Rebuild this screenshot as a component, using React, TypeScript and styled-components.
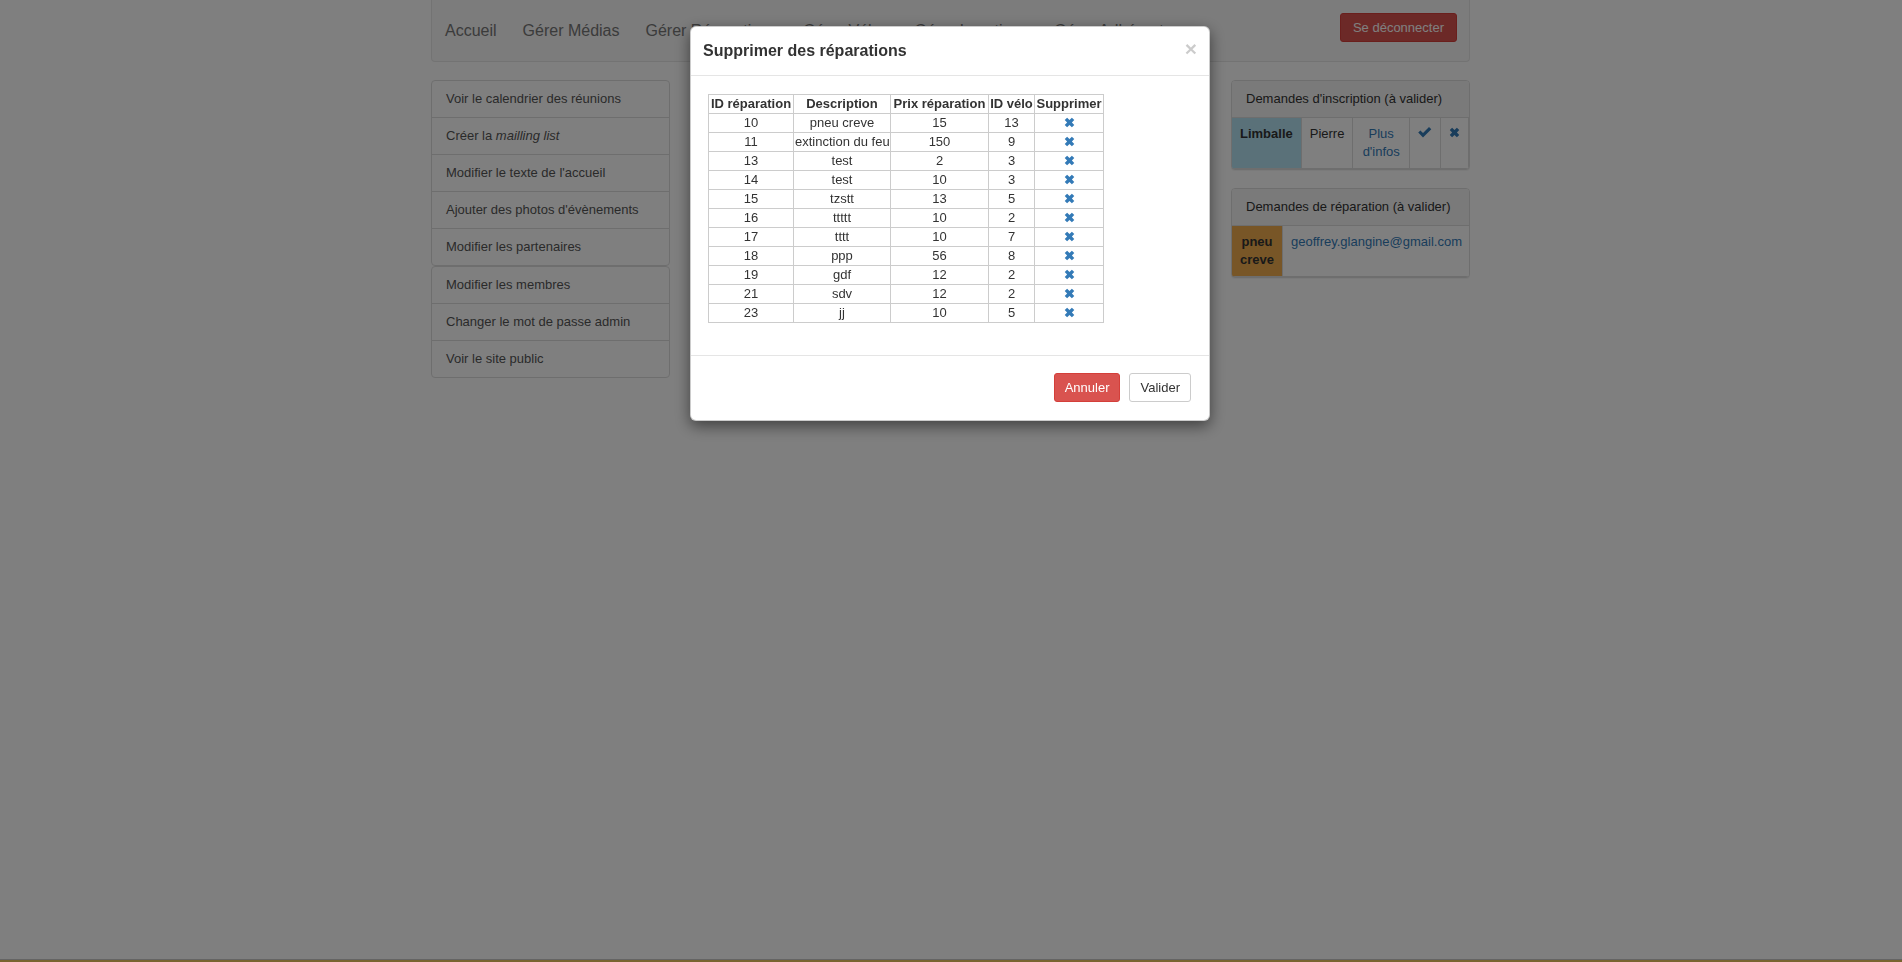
import React from "react";
import styled, { createGlobalStyle } from "styled-components";

const GlobalStyle = createGlobalStyle`
  * { box-sizing: border-box; }
  html, body { margin: 0; padding: 0; }
  body {
    font-family: "Liberation Sans", Arial, Helvetica, sans-serif;
    font-size: 13px;
    color: #333;
    background: #fff;
    overflow: hidden;
  }
`;

const Page = styled.div`
  min-height: 100vh;
  display: flex;
  flex-direction: column;
`;

const Container = styled.div`
  width: 1039px;
  margin-left: calc(50% - 520px);
`;

const Navbar = styled.nav`
  height: 62px;
  background: #f8f8f8;
  border: 1px solid #e7e7e7;
  border-top: none;
  border-radius: 0 0 4px 4px;
  display: flex;
  align-items: center;
  padding-right: 12px;
`;

const NavList = styled.ul`
  display: flex;
  list-style: none;
  margin: 0;
  padding: 0;
`;

const NavLink = styled.li`
  padding: 0 13px;
  font-size: 16px;
  line-height: 20px;
  color: #777;
  white-space: nowrap;
`;

const Button = styled.button<{ $variant?: "danger" | "default" }>`
  font-family: inherit;
  font-size: 13px;
  line-height: 19px;
  padding: 4px 10px;
  border-radius: 3px;
  cursor: pointer;
  white-space: nowrap;
  border: 1px solid ${(p) => (p.$variant === "danger" ? "#d43f3a" : "#ccc")};
  background: ${(p) => (p.$variant === "danger" ? "#d9534f" : "#fff")};
  color: ${(p) => (p.$variant === "danger" ? "#fff" : "#333")};
`;

const LogoutButton = styled(Button)`
  margin-left: auto;
  align-self: flex-start;
  margin-top: 13px;
  padding: 4px 12px;
`;

const Row = styled.div`
  display: grid;
  grid-template-columns: 239px 1fr 239px;
  margin-top: 18px;
  align-items: start;
`;

const ListGroup = styled.div`
  display: flex;
  flex-direction: column;
`;

const ListItem = styled.a`
  display: block;
  padding: 9px 14px;
  line-height: 18px;
  font-size: 13px;
  color: #555;
  background: #fff;
  border: 1px solid #ddd;
  margin-bottom: -1px;
  text-decoration: none;
  &:first-child { border-radius: 4px 4px 0 0; }
  &:last-child { border-radius: 0 0 4px 4px; margin-bottom: 0; }
`;

const Panel = styled.div`
  border: 1px solid #ddd;
  border-radius: 4px;
  background: #fff;
  margin-bottom: 18px;
  overflow: hidden;
  box-shadow: 0 1px 1px rgba(0, 0, 0, 0.05);
`;

const PanelHeading = styled.div`
  padding: 9px 14px;
  line-height: 18px;
  background: #f5f5f5;
  border-bottom: 1px solid #ddd;
  color: #333;
`;

const PanelTable = styled.table`
  border-collapse: collapse;
  font-size: 13px;
`;

const PanelCell = styled.td<{ $bg?: string; $bold?: boolean; $center?: boolean; $link?: boolean }>`
  border: 1px solid #ddd;
  border-top: none;
  padding: 7px 8px;
  line-height: 18px;
  vertical-align: top;
  background: ${(p) => p.$bg || "#fff"};
  font-weight: ${(p) => (p.$bold ? "bold" : "normal")};
  text-align: ${(p) => (p.$center ? "center" : "left")};
  color: ${(p) => (p.$link ? "#337ab7" : "#333")};
  &:first-child { border-left: none; }
`;

const BottomStrip = styled.div`
  margin-top: auto;
  height: 3px;
  border-top: 1px solid #c8c8c8;
  background: #f0c860;
`;

const Backdrop = styled.div`
  position: fixed;
  inset: 0;
  background: rgba(0, 0, 0, 0.5);
  z-index: 10;
`;

const ModalLayer = styled.div`
  position: fixed;
  inset: 0;
  z-index: 20;
`;

const ModalDialog = styled.div`
  width: 520px;
  margin: 26px 0 0 calc(50% - 261px);
  background: #fff;
  border: 1px solid rgba(0, 0, 0, 0.2);
  border-radius: 6px;
  box-shadow: 0 5px 15px rgba(0, 0, 0, 0.5);
`;

const ModalHeader = styled.div`
  display: flex;
  justify-content: space-between;
  align-items: center;
  padding: 14px 12px;
  border-bottom: 1px solid #e5e5e5;
`;

const ModalTitle = styled.h4`
  margin: 0;
  font-size: 16px;
  line-height: 20px;
  font-weight: bold;
  color: #333;
`;

const CloseButton = styled.span`
  font-size: 21px;
  font-weight: bold;
  line-height: 1;
  color: #000;
  opacity: 0.2;
  margin-top: -5px;
  cursor: pointer;
`;

const ModalBody = styled.div`
  padding: 18px 17px 17px;
`;

const RepairTable = styled.table`
  border-collapse: collapse;
  table-layout: fixed;
  width: 395px;
  margin-bottom: 15px;
  font-size: 13px;
  color: #333;
`;

const Th = styled.th`
  border: 1px solid #ccc;
  padding: 0 1px;
  line-height: 18px;
  font-weight: bold;
  text-align: center;
  white-space: nowrap;
`;

const Td = styled.td`
  border: 1px solid #ccc;
  padding: 0 1px;
  line-height: 18px;
  text-align: center;
  white-space: nowrap;
  vertical-align: middle;
`;

const IconWrap = styled.span`
  display: inline-flex;
  vertical-align: middle;
  color: #337ab7;
  margin-top: -2px;
`;

const ModalFooter = styled.div`
  display: flex;
  justify-content: flex-end;
  gap: 9px;
  padding: 17px 18px 18px 17px;
  border-top: 1px solid #e5e5e5;
`;

const RemoveIcon = ({ size = 11 }: { size?: number }) => (
  <svg width={size} height={size} viewBox="0 0 12 12" fill="currentColor">
    <path d="M0.8 3.4 L3.4 0.8 L6 3.4 L8.6 0.8 L11.2 3.4 L8.6 6 L11.2 8.6 L8.6 11.2 L6 8.6 L3.4 11.2 L0.8 8.6 L3.4 6 Z" />
  </svg>
);

const OkIcon = () => (
  <svg width={14} height={11} viewBox="0 0 14 11" fill="currentColor">
    <path d="M0.2 5.6 L2.4 3.4 L5 6 L11 0 L13.3 2.3 L5 10.6 Z" />
  </svg>
);

const repairs: [number, string, number, number][] = [
  [10, "pneu creve", 15, 13],
  [11, "extinction du feu", 150, 9],
  [13, "test", 2, 3],
  [14, "test", 10, 3],
  [15, "tzstt", 13, 5],
  [16, "ttttt", 10, 2],
  [17, "tttt", 10, 7],
  [18, "ppp", 56, 8],
  [19, "gdf", 12, 2],
  [21, "sdv", 12, 2],
  [23, "jj", 10, 5],
];

const navItems = [
  "Accueil",
  "Gérer Médias",
  "Gérer Réparations",
  "Gérer Vélos",
  "Gérer Locations",
  "Gérer Adhérents",
];

export default function App() {
  return (
    <>
      <GlobalStyle />
      <Page>
        <Container>
          <Navbar>
            <NavList>
              {navItems.map((n) => (
                <NavLink key={n}>{n}</NavLink>
              ))}
            </NavList>
            <LogoutButton $variant="danger">Se déconnecter</LogoutButton>
          </Navbar>
          <Row>
            <div>
              <ListGroup>
                <ListItem>Voir le calendrier des réunions</ListItem>
                <ListItem>
                  Créer la <em>mailling list</em>
                </ListItem>
                <ListItem>Modifier le texte de l'accueil</ListItem>
                <ListItem>Ajouter des photos d'évènements</ListItem>
                <ListItem>Modifier les partenaires</ListItem>
              </ListGroup>
              <ListGroup>
                <ListItem>Modifier les membres</ListItem>
                <ListItem>Changer le mot de passe admin</ListItem>
                <ListItem>Voir le site public</ListItem>
              </ListGroup>
            </div>
            <div />
            <div>
              <Panel>
                <PanelHeading>Demandes d'inscription (à valider)</PanelHeading>
                <PanelTable>
                  <tbody>
                    <tr>
                      <PanelCell $bg="#b4e2f2" $bold>Limballe</PanelCell>
                      <PanelCell>Pierre</PanelCell>
                      <PanelCell $center $link>Plus d'infos</PanelCell>
                      <PanelCell $center $link>
                        <OkIcon />
                      </PanelCell>
                      <PanelCell $center $link>
                        <RemoveIcon size={11} />
                      </PanelCell>
                    </tr>
                  </tbody>
                </PanelTable>
              </Panel>
              <Panel>
                <PanelHeading>Demandes de réparation (à valider)</PanelHeading>
                <PanelTable>
                  <tbody>
                    <tr>
                      <PanelCell $bg="#f0ad4e" $bold $center>pneu creve</PanelCell>
                      <PanelCell $link>geoffrey.glangine@gmail.com</PanelCell>
                    </tr>
                  </tbody>
                </PanelTable>
              </Panel>
            </div>
          </Row>
        </Container>
        <BottomStrip />
      </Page>
      <Backdrop />
      <ModalLayer>
        <ModalDialog>
          <ModalHeader>
            <ModalTitle>Supprimer des réparations</ModalTitle>
            <CloseButton>×</CloseButton>
          </ModalHeader>
          <ModalBody>
            <RepairTable>
              <colgroup>
                <col style={{ width: 85 }} />
                <col style={{ width: 97 }} />
                <col style={{ width: 98 }} />
                <col style={{ width: 46 }} />
                <col style={{ width: 69 }} />
              </colgroup>
              <thead>
                <tr>
                  <Th>ID réparation</Th>
                  <Th>Description</Th>
                  <Th>Prix réparation</Th>
                  <Th>ID vélo</Th>
                  <Th>Supprimer</Th>
                </tr>
              </thead>
              <tbody>
                {repairs.map(([id, desc, price, bike]) => (
                  <tr key={id}>
                    <Td>{id}</Td>
                    <Td>{desc}</Td>
                    <Td>{price}</Td>
                    <Td>{bike}</Td>
                    <Td>
                      <IconWrap>
                        <RemoveIcon />
                      </IconWrap>
                    </Td>
                  </tr>
                ))}
              </tbody>
            </RepairTable>
          </ModalBody>
          <ModalFooter>
            <Button $variant="danger">Annuler</Button>
            <Button>Valider</Button>
          </ModalFooter>
        </ModalDialog>
      </ModalLayer>
    </>
  );
}
